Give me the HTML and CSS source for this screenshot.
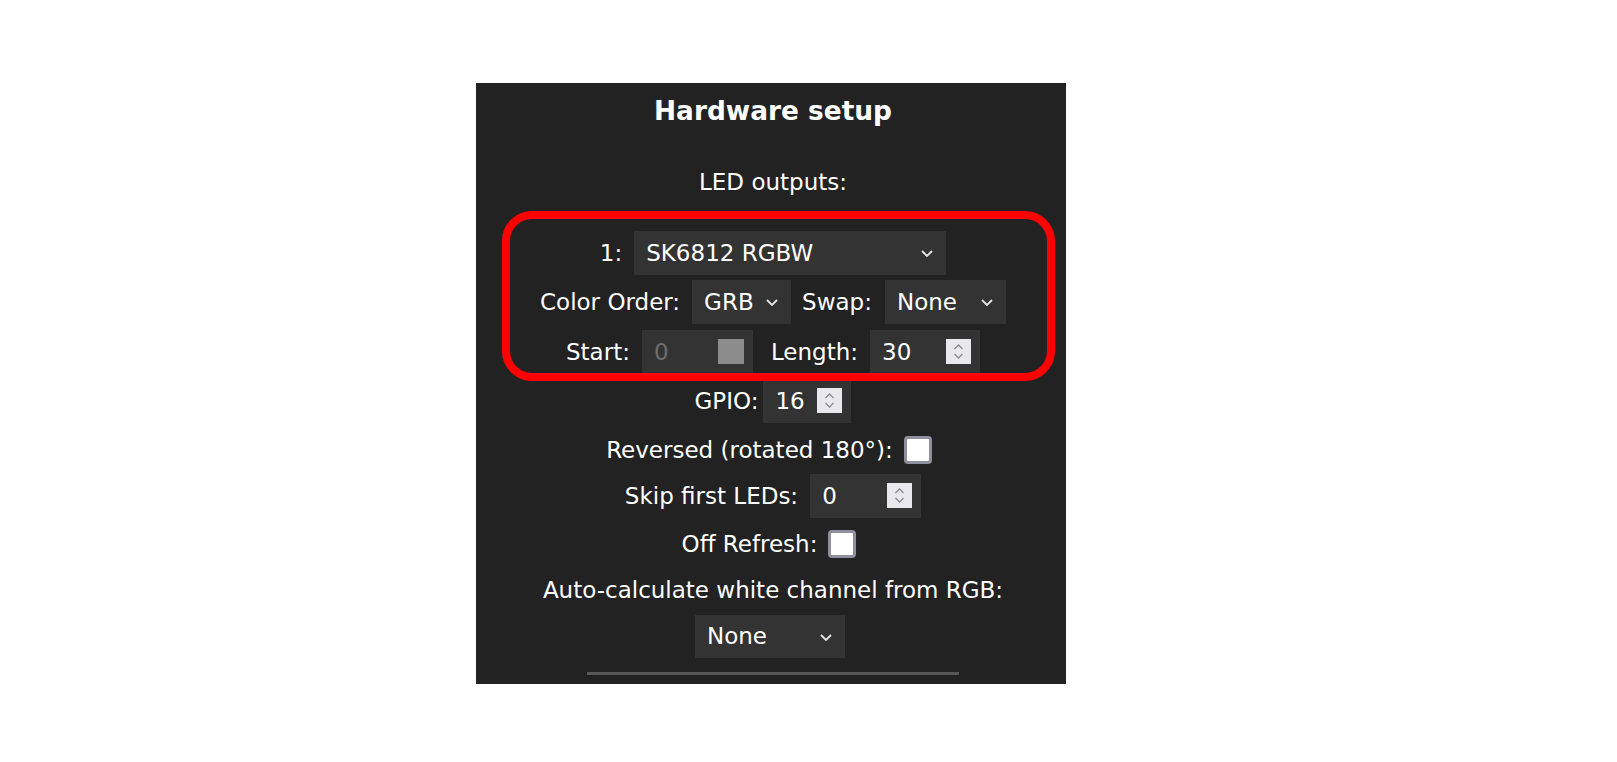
FILE: index.html
```html
<!DOCTYPE html>
<html lang="en">
<head>
<meta charset="utf-8">
<title>Hardware setup</title>
<link rel="stylesheet" href="styles.css">
</head>
<body>
<div class="panel">
  <h2 class="title">Hardware setup</h2>
  <div class="led-label">LED outputs:</div>
  <div class="rows">
    <div class="row">
      <span class="lbl g12">1:</span>
      <span class="selwrap w-type"><select class="sel"><option>SK6812 RGBW</option></select><svg class="chev" viewBox="0 0 12 7"><path d="M1 1 L6 6 L11 1"/></svg></span>
    </div>
    <div class="row">
      <span class="lbl g12">Color Order:</span>
      <span class="selwrap w-order"><select class="sel"><option>GRB</option></select><svg class="chev" viewBox="0 0 12 7"><path d="M1 1 L6 6 L11 1"/></svg></span>
      <span class="lbl g13 ml11">Swap:</span>
      <span class="selwrap w-swap"><select class="sel"><option>None</option></select><svg class="chev" viewBox="0 0 12 7"><path d="M1 1 L6 6 L11 1"/></svg></span>
    </div>
    <div class="row">
      <span class="lbl g12">Start:</span>
      <span class="num w-start"><input class="inp" type="number" value="0" disabled><span class="spin-off"></span></span>
      <span class="lbl g12 ml18">Length:</span>
      <span class="num w-len"><input class="inp" type="number" value="30"><svg class="spin" viewBox="0 0 25 25"><rect width="25" height="25"/><path d="M8.5 10 L12.5 6 L16.5 10 M8.5 15 L12.5 19 L16.5 15"/></svg></span>
    </div>
    <div class="row">
      <span class="lbl g5">GPIO:</span>
      <span class="num w-gpio"><input class="inp" type="number" value="16"><svg class="spin" viewBox="0 0 25 25"><rect width="25" height="25"/><path d="M8.5 10 L12.5 6 L16.5 10 M8.5 15 L12.5 19 L16.5 15"/></svg></span>
    </div>
  </div>
  <div class="row row-rev">
    <span class="lbl g11">Reversed (rotated 180°):</span>
    <span class="check"></span>
  </div>
  <div class="row row-skip">
    <span class="lbl g12">Skip first LEDs:</span>
    <span class="num w-skip"><input class="inp" type="number" value="0"><svg class="spin" viewBox="0 0 25 25"><rect width="25" height="25"/><path d="M8.5 10 L12.5 6 L16.5 10 M8.5 15 L12.5 19 L16.5 15"/></svg></span>
  </div>
  <div class="row row-off">
    <span class="lbl g11">Off Refresh:</span>
    <span class="check"></span>
  </div>
  <div class="row row-auto">
    <span class="lbl">Auto-calculate white channel from RGB:</span>
  </div>
  <div class="row row-white">
    <span class="selwrap w-white"><select class="sel"><option>None</option></select><svg class="chev" viewBox="0 0 12 7"><path d="M1 1 L6 6 L11 1"/></svg></span>
  </div>
  <hr class="sep">
  <div class="annot"></div>
</div>
</body>
</html>
```

FILE: styles.css
```css
html, body {
  margin: 0;
  padding: 0;
  background: #ffffff;
}

body {
  font-family: "DejaVu Sans", Verdana, sans-serif;
  color: #ffffff;
}

.panel {
  position: relative;
  box-sizing: border-box;
  margin: 83px 0 0 476px;
  width: 590px;
  height: 601px;
  overflow: hidden;
  background: #222222;
  padding: 13px 0 0 4px;
  display: flex;
  flex-direction: column;
  align-items: center;
  font-size: 23px;
}

.title {
  margin: 0;
  height: 30px;
  line-height: 30px;
  font-size: 26.4px;
  font-weight: bold;
  color: #ffffff;
}

.led-label {
  margin-top: 42px;
  height: 29px;
  line-height: 29px;
}

.rows {
  margin-top: 34px;
  display: flex;
  flex-direction: column;
  align-items: center;
  gap: 5.33px;
}

.row {
  display: flex;
  align-items: center;
  justify-content: center;
  height: 44px;
  white-space: nowrap;
}

.lbl {
  line-height: 30px;
}

.g5 { margin-right: 5px; }
.g11 { margin-right: 11px; }
.g12 { margin-right: 12px; }
.g13 { margin-right: 13px; }
.ml11 { margin-left: 11px; }
.ml18 { margin-left: 18px; }

.selwrap {
  position: relative;
  display: flex;
  height: 44px;
}

.sel {
  -webkit-appearance: none;
  appearance: none;
  width: 100%;
  height: 44px;
  margin: 0;
  padding: 0 0 0 12px;
  border: none;
  border-radius: 0;
  background: #333333;
  color: #ffffff;
  font: inherit;
  font-size: 23px;
  outline: none;
}

.chev {
  position: absolute;
  right: 13px;
  top: 19px;
  width: 12px;
  height: 7px;
  fill: none;
  stroke: #e6e6e6;
  stroke-width: 1.8;
  pointer-events: none;
}

.w-type { width: 312px; }
.w-order { width: 99px; }
.w-swap { width: 121px; }
.w-white { width: 150px; }

.num {
  display: flex;
  align-items: center;
  box-sizing: border-box;
  height: 44px;
  padding: 0 9px 0 12px;
  background: #333333;
}

.inp {
  -moz-appearance: textfield;
  appearance: textfield;
  flex: 1;
  min-width: 0;
  height: 30px;
  margin: 0;
  padding: 0;
  border: none;
  background: transparent;
  color: #ffffff;
  font: inherit;
  font-size: 23px;
  outline: none;
}

.inp::-webkit-inner-spin-button,
.inp::-webkit-outer-spin-button {
  -webkit-appearance: none;
  margin: 0;
}

.inp:disabled {
  color: #6e6e6e;
}

.spin {
  flex: none;
  width: 25px;
  height: 25px;
}

.spin rect {
  fill: #e9e9ed;
}

.spin path {
  fill: none;
  stroke: #8a8a8a;
  stroke-width: 1.3;
}

.spin-off {
  flex: none;
  width: 26px;
  height: 25px;
  background: #8c8c8c;
}

.w-start { width: 111px; }
.w-len { width: 110px; }
.w-gpio { width: 88px; }
.w-skip { width: 111px; }

.row-rev { margin-top: 5.5px; }
.row-skip { margin-top: 1.5px; }
.row-off { margin-top: 4px; }
.row-auto { margin-top: 2px; }
.row-white { margin-top: 3px; height: 43px; }
.row-white .selwrap, .row-white .sel { height: 43px; }
.row-white .selwrap { margin-right: 6px; }

.check {
  box-sizing: border-box;
  width: 28px;
  height: 28px;
  margin-right: 8px;
  border: 3px solid #8f8f9d;
  border-radius: 4px;
  background: #ffffff;
}

.sep {
  margin: 14px 0 0 0;
  width: 372px;
  height: 3px;
  border: none;
  background: #575757;
}

.annot {
  position: absolute;
  left: 26px;
  top: 128px;
  width: 553px;
  height: 170px;
  box-sizing: border-box;
  border: 8px solid #ff0000;
  border-radius: 30px;
  pointer-events: none;
}
```
